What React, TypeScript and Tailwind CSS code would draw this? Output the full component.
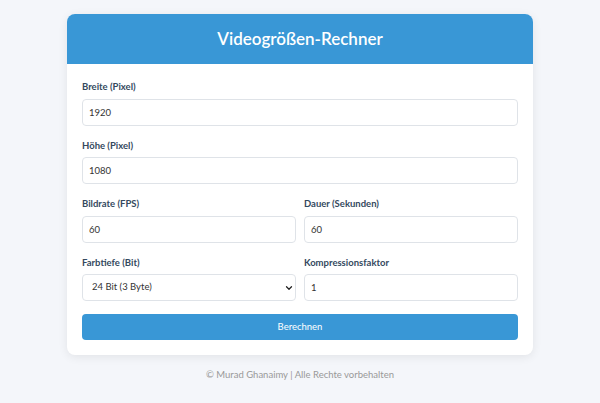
import { ChevronDown } from "lucide-react";

const Field = ({ label, value, last }: { label: string; value: string; last?: boolean }) => (
  <div className={last ? "mb-[13px] flex-1" : "mb-[12px] flex-1"}>
    <label className="mb-[4px] block text-[9.5px] leading-[15.5px] font-bold text-[#34495e]">{label}</label>
    <input
      defaultValue={value}
      className="block h-[27px] w-full rounded-[4px] border border-[#dfe3e8] bg-white px-[6px] text-[9.5px] text-[#333] outline-none"
    />
  </div>
);

export default function App() {
  return (
    <div className="min-h-[403px] bg-[#f4f6fa] pt-[14px] font-['Lato',sans-serif]">
      <div className="mx-auto w-[466px] overflow-hidden rounded-[8px] bg-white shadow-[0_2px_10px_rgba(0,0,0,0.08)]">
        {/* Header */}
        <div className="flex h-[50px] items-center justify-center bg-[#3997d6]">
          <h1 className="text-[17px] font-semibold text-white">Videogrößen-Rechner</h1>
        </div>

        {/* Form */}
        <div className="px-[15px] pt-[15px] pb-[15px]">
          <Field label="Breite (Pixel)" value="1920" />
          <Field label="Höhe (Pixel)" value="1080" />
          <div className="flex gap-[8px]">
            <Field label="Bildrate (FPS)" value="60" />
            <Field label="Dauer (Sekunden)" value="60" />
          </div>
          <div className="flex gap-[8px]">
            <div className="mb-[13px] flex-1">
              <label className="mb-[4px] block text-[9.5px] leading-[15.5px] font-bold text-[#34495e]">Farbtiefe (Bit)</label>
              <div className="relative">
                <select
                  defaultValue="24"
                  className="block h-[27px] w-full appearance-none rounded-[4px] border border-[#dfe3e8] bg-white px-[9px] text-[9.5px] text-[#333] outline-none"
                >
                  <option value="8">8 Bit (1 Byte)</option>
                  <option value="16">16 Bit (2 Byte)</option>
                  <option value="24">24 Bit (3 Byte)</option>
                  <option value="32">32 Bit (4 Byte)</option>
                </select>
                <ChevronDown className="pointer-events-none absolute top-[9px] right-[2px] h-[10px] w-[10px] text-[#222]" strokeWidth={3} />
              </div>
            </div>
            <Field label="Kompressionsfaktor" value="1" last />
          </div>
          <button className="block h-[26px] w-full rounded-[4px] bg-[#3997d6] text-[9.5px] text-white">Berechnen</button>
        </div>
      </div>

      <p className="mt-[13px] text-center text-[9.5px] leading-[14px] text-[#999]">© Murad Ghanaimy | Alle Rechte vorbehalten</p>
    </div>
  );
}
